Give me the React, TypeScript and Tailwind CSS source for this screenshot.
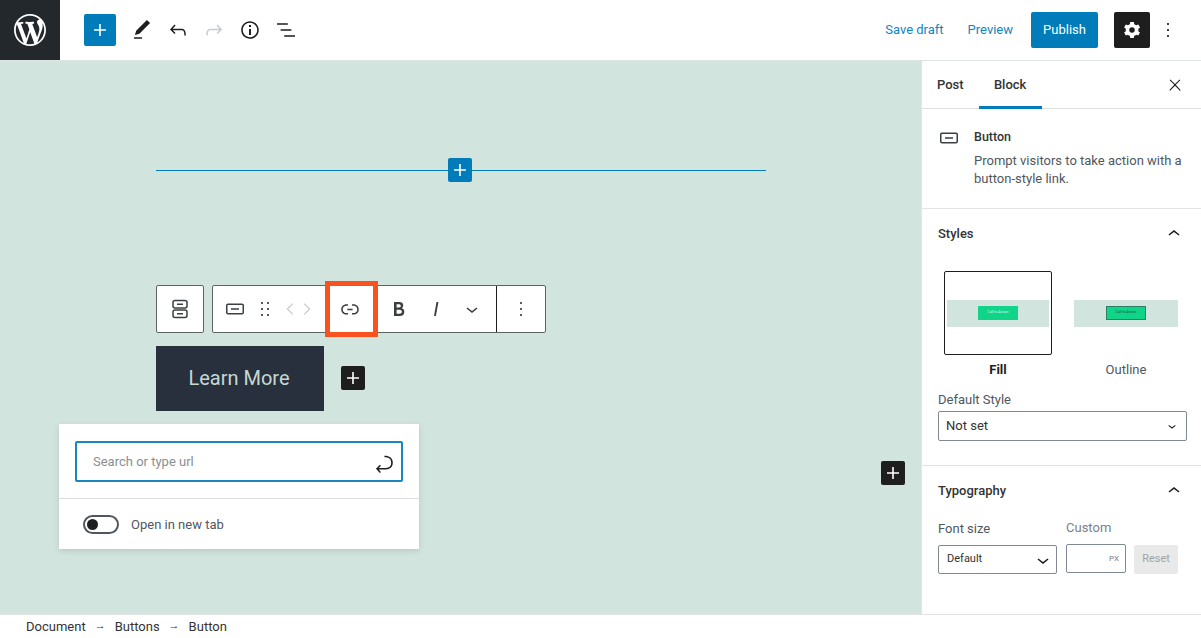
import type { ReactNode } from "react";

const icons = {
  plus: "M18 11.2h-5.2V6h-1.6v5.2H6v1.6h5.2V18h1.6v-5.2H18z",
  edit: "M20.1 5.1L16.9 2 6.2 12.7l-1.3 4.4 4.5-1.3L20.1 5.1zM4 20.8h8v-1.5H4v1.5z",
  undo: "M18.3 11.7c-.6-.6-1.4-.9-2.3-.9H6.7l2.9-3.3-1.1-1-4.5 5L8.5 16l1-1-2.7-2.7H16c.5 0 .9.2 1.3.5 1 1 1 3.4 1 4.5v.3h1.5v-.2c0-1.5 0-4.3-1.5-5.7z",
  redo: "M15.6 6.5l-1.1 1 2.9 3.3H8c-.9 0-1.7.3-2.3.9-1.4 1.5-1.4 4.2-1.4 5.6v.2h1.5v-.3c0-1.1 0-3.5 1-4.5.3-.3.7-.5 1.3-.5h9.2L14.5 15l1.1 1.1 4.6-4.6-4.6-5z",
  info: "M12 3.2c-4.8 0-8.8 3.9-8.8 8.8 0 4.8 3.9 8.8 8.8 8.8 4.8 0 8.8-3.9 8.8-8.8 0-4.8-4-8.8-8.8-8.8zm0 16c-4 0-7.2-3.3-7.2-7.2C4.8 8 8 4.8 12 4.8s7.2 3.3 7.2 7.2c0 4-3.2 7.2-7.2 7.2zM11 17h2v-6h-2v6zm0-8h2V7h-2v2z",
  list: "M13.8 5.2H3v1.5h10.8V5.2zm-3.6 12v1.5H21v-1.5H10.2zm7.2-6H6.6v1.5h10.8v-1.5z",
  cog: "M19 12c0-.5 0-.9-.1-1.3l1.9-1.4-1.9-3.3-2.2.9c-.7-.5-1.4-1-2.2-1.3L14 3.3h-3.9l-.4 2.3c-.8.3-1.6.8-2.2 1.3l-2.2-.9-1.9 3.3 1.9 1.4c-.1.4-.1.9-.1 1.3s0 .9.1 1.3l-1.9 1.4 1.9 3.3 2.2-.9c.7.5 1.4 1 2.2 1.3l.4 2.3H14l.4-2.3c.8-.3 1.6-.8 2.2-1.3l2.2.9 1.9-3.3-1.9-1.4c.1-.4.2-.8.2-1.3zM12 15a3 3 0 110-6 3 3 0 010 6z",
  more: "M13 19h-2v-2h2v2zm0-6h-2v-2h2v2zm0-6h-2V5h2v2z",
  close: "M13 11.8l6.1-6.3-1-1-6.1 6.2-6.1-6.2-1 1 6.1 6.3-6.5 6.7 1 1 6.5-6.6 6.5 6.6 1-1z",
  button: "M19 6.5H5c-1.1 0-2 .9-2 2v7c0 1.1.9 2 2 2h14c1.1 0 2-.9 2-2v-7c0-1.1-.9-2-2-2zm.5 9c0 .3-.2.5-.5.5H5c-.3 0-.5-.2-.5-.5v-7c0-.3.2-.5.5-.5h14c.3 0 .5.2.5.5v7zM8 12.8h8v-1.5H8v1.5z",
  drag: "M8 7h2V5H8v2zm0 6h2v-2H8v2zm0 6h2v-2H8v2zm6-14v2h2V5h-2zm0 8h2v-2h-2v2zm0 6h2v-2h-2v2z",
  link: "M15.6 7.2H14v1.5h1.6c2 0 3.7 1.7 3.7 3.7s-1.7 3.7-3.7 3.7H14v1.5h1.6c2.8 0 5.2-2.3 5.2-5.2 0-2.9-2.3-5.2-5.2-5.2zM4.7 12.4c0-2 1.7-3.7 3.7-3.7H10V7.2H8.4c-2.9 0-5.2 2.3-5.2 5.2 0 2.9 2.3 5.2 5.2 5.2H10v-1.5H8.4c-2 0-3.7-1.7-3.7-3.7zm4.6.9h5.3v-1.5H9.3v1.5z",
  bold: "M14.7 11.3c1-.6 1.5-1.6 1.5-3 0-2.3-1.3-3.4-4-3.4H7v14h5.8c1.4 0 2.5-.3 3.3-1 .8-.7 1.2-1.7 1.2-2.9.1-1.9-.8-3.1-2.6-3.7zm-5.1-4h2.3c.6 0 1.1.1 1.4.4.3.3.5.7.5 1.2s-.2 1-.5 1.2c-.3.3-.8.4-1.4.4H9.6V7.3zm4.6 9c-.4.3-1 .4-1.7.4H9.6v-3.9h2.9c.7 0 1.3.2 1.7.5.4.3.6.8.6 1.5s-.2 1.2-.6 1.5z",
  italic: "M12.5 5L10 19h1.9l2.5-14z",
  down: "M17.5 11.6L12 16l-5.5-4.4.9-1.2L12 14l4.5-3.6 1 1.2z",
  up: "M6.5 12.4L12 8l5.5 4.4-.9 1.2L12 10l-4.5 3.6-1-1.2z",
  back: "M15.5 6.5L10 12l5.5 5.5-.9.9L8.2 12l6.4-6.4z",
  forward: "M8.5 6.5L14 12l-5.5 5.5.9.9 6.4-6.4-6.4-6.4z",
  enter:
    "M6.734 16.106l2.176-2.38-1.093-1.028-3.846 4.158 3.846 4.157 1.093-1.027-2.176-2.38h2.811c1.125 0 2.25.03 3.374 0 1.428-.001 3.362-.25 4.963-1.277 1.682-1.08 2.92-2.906 2.92-5.7 0-2.797-1.24-4.623-2.92-5.7-1.6-1.029-3.535-1.278-4.963-1.279h-.47v1.5h.47c1.266.001 2.92.228 4.152 1.02 1.2.771 2.081 1.99 2.081 4.459 0 2.47-.88 3.689-2.08 4.46-1.233.79-2.888 1.016-4.152 1.017h-6.186z",
};

function Icon({ d, className = "w-6 h-6 fill-[#1e1e1e]" }: { d: string; className?: string }) {
  return (
    <svg viewBox="0 0 24 24" className={`shrink-0 ${className}`}>
      <path d={d} fillRule="evenodd" />
    </svg>
  );
}

function Section({ title, children }: { title: string; children: ReactNode }) {
  return (
    <section className="border-b border-[#e4e4e4] last:border-b-0 px-4 pt-4">
      <div className="flex items-center justify-between h-[18px]">
        <h2 className="text-[13px] font-medium text-[#333]">{title}</h2>
        <Icon d={icons.up} className="w-6 h-6 fill-[#1e1e1e] mr-[-1px]" />
      </div>
      {children}
    </section>
  );
}

function StylePreview({ active, outline, label }: { active?: boolean; outline?: boolean; label: string }) {
  return (
    <div className="flex flex-col items-center">
      <div
        className={`w-[108px] h-[84px] flex items-center rounded-[2px] border ${
          active ? "border-[#1e1e1e] px-[2px]" : "border-transparent px-px"
        }`}
      >
        <div className="w-full h-[27px] bg-[#d1e4dd] flex items-center justify-center">
          <div
            className={`w-[40px] h-[14px] bg-[#10d589] flex items-center justify-center text-[3.5px] ${
              outline ? "border border-[#2f7f67] text-[#1d4c3e]" : "text-[#d6f5e8]"
            }`}
          >
            Call to Action
          </div>
        </div>
      </div>
      <span className={`mt-[7px] text-[13px] leading-[15px] ${active ? "font-bold text-[#1e1e1e]" : "text-[#50575e]"}`}>
        {label}
      </span>
    </div>
  );
}

function AddBlock({ className = "" }: { className?: string }) {
  return (
    <button className={`w-6 h-6 bg-[#1e1e1e] rounded-[2px] flex items-center justify-center ${className}`}>
      <Icon d={icons.plus} className="w-6 h-6 fill-white" />
    </button>
  );
}

export default function App() {
  return (
    <div className="w-[1201px] h-[638px] overflow-hidden bg-white flex flex-col font-['Roboto',sans-serif] text-[#1e1e1e]">
      {/* Top bar */}
      <header className="h-[61px] shrink-0 flex items-center border-b border-[#dfe3e2]">
        <div className="w-[60px] h-[60px] bg-[#23282d] flex items-center justify-center">
          <svg viewBox="0 0 20 20" className="w-[32px] h-[32px] fill-white">
            <path d="M20 10c0-5.51-4.49-10-10-10C4.48 0 0 4.49 0 10c0 5.52 4.48 10 10 10 5.51 0 10-4.48 10-10zM7.78 15.37L4.37 6.22c.55-.02 1.17-.08 1.17-.08.5-.06.44-1.13-.06-1.11 0 0-1.45.11-2.37.11-.18 0-.37 0-.58-.01C4.12 2.69 6.87 1.11 10 1.11c2.33 0 4.45.87 6.05 2.34-.68-.11-1.65.39-1.65 1.58 0 .74.45 1.36.9 2.1.35.61.55 1.36.55 2.46 0 1.49-1.4 5-1.4 5l-3.03-8.37c.54-.02.82-.17.82-.17.5-.05.44-1.25-.06-1.22 0 0-1.44.12-2.38.12-.87 0-2.33-.12-2.33-.12-.5-.03-.56 1.2-.06 1.22l.92.08 1.26 3.41zM17.41 10c.24-.64.74-1.87.43-4.25.7 1.29 1.05 2.71 1.05 4.25 0 3.29-1.73 6.24-4.4 7.78.97-2.59 1.94-5.2 2.92-7.78zM6.1 18.09C3.12 16.65 1.11 13.53 1.11 10c0-1.3.23-2.48.72-3.59C3.25 10.3 4.67 14.2 6.1 18.09zm4.03-6.63l2.58 6.98c-.86.29-1.76.45-2.71.45-.79 0-1.57-.11-2.29-.33.81-2.38 1.62-4.74 2.42-7.1z" />
          </svg>
        </div>
        <button className="ml-6 w-8 h-8 rounded-[2px] bg-[#007cba] flex items-center justify-center">
          <Icon d={icons.plus} className="w-6 h-6 fill-white" />
        </button>
        <div className="ml-[14px] flex items-center gap-3">
          <Icon d={icons.edit} />
          <Icon d={icons.undo} />
          <Icon d={icons.redo} className="w-6 h-6 fill-[#c8cccf]" />
          <Icon d={icons.info} />
          <Icon d={icons.list} />
        </div>
        <div className="ml-auto flex items-center text-[13px] text-[#0f86c2]">
          <span>Save draft</span>
          <span className="ml-[24px]">Preview</span>
          <button className="ml-[18px] w-[67px] h-9 rounded-[2px] bg-[#007cba] text-white">Publish</button>
          <button className="ml-4 w-9 h-9 rounded-[2px] bg-[#1e1e1e] flex items-center justify-center">
            <Icon d={icons.cog} className="w-[22px] h-[22px] fill-white" />
          </button>
          <Icon d={icons.more} className="ml-[6px] mr-[21px] w-6 h-6 fill-[#3c4245]" />
        </div>
      </header>

      <div className="flex-1 min-h-0 flex">
        {/* Canvas */}
        <main className="relative w-[921px] shrink-0 bg-[#d1e4dd] pl-[156px] pt-[97px]">
          <div className="relative w-[610px] h-6">
            <div className="absolute inset-x-0 top-[12px] h-px bg-[#007cba]" />
            <button className="relative ml-[292px] w-6 h-6 rounded-[2px] bg-[#007cba] flex items-center justify-center">
              <Icon d={icons.plus} className="w-6 h-6 fill-white" />
            </button>
          </div>

          {/* Block toolbar */}
          <div className="mt-[103px] flex gap-2 h-12">
            <div className="w-12 bg-white border border-[#5d6563] rounded-[2px] flex items-center justify-center">
              <svg viewBox="0 0 24 24" className="w-6 h-6 fill-none stroke-[#3a3f41] stroke-[1.5]">
                <rect x="5" y="3.5" width="14" height="7.5" rx="2" />
                <rect x="5" y="13" width="14" height="7.5" rx="2" />
                <path d="M9 7.2h6M9 16.8h6" />
              </svg>
            </div>
            <div className="relative w-[334px] bg-white border border-[#5d6563] rounded-[2px] flex items-center">
              <Icon d={icons.button} className="ml-[10px] w-6 h-6 fill-[#3a3f41]" />
              <Icon d={icons.drag} className="ml-[6px] w-6 h-6 fill-[#555d60]" />
              <Icon d={icons.back} className="ml-[2px] w-[22px] h-[22px] fill-[#c4c8ca]" />
              <Icon d={icons.forward} className="ml-[-5px] w-[22px] h-[22px] fill-[#c4c8ca]" />
              <Icon d={icons.link} className="ml-[20px] w-6 h-6 fill-[#3a3f41]" />
              <Icon d={icons.bold} className="ml-[25px] w-6 h-6 fill-[#3a3f41]" />
              <Icon d={icons.italic} className="ml-[13px] w-6 h-6 fill-[#3a3f41]" />
              <Icon d={icons.down} className="ml-3 w-6 h-6 fill-[#3a3f41]" />
              <div className="ml-[12px] h-full w-px bg-[#1e1e1e]" />
              <Icon d={icons.more} className="ml-[12px] w-6 h-6 fill-[#555d60]" />
              {/* Highlight drawn over the screenshot */}
              <div className="absolute left-[112px] top-[-5px] w-[53px] h-[56px] border-[5px] border-[#f9521e]" />
            </div>
          </div>

          {/* Button block */}
          <div className="mt-[13px] flex items-center">
            <div className="w-[168px] h-[65px] pr-[2px] pb-[2px] bg-[#28303d] flex items-center justify-center text-[20px] text-[#c6d8d1]">
              Learn More
            </div>
            <AddBlock className="ml-[17px] -mt-px" />
          </div>

          {/* Link popover */}
          <div className="absolute left-[59px] top-[363px] w-[360px] h-[125px] bg-white shadow-[0_2px_6px_rgba(0,0,0,0.12)]">
            <div className="h-[75px] border-b border-[#dddddd] pl-4 pt-[17px]">
              <div className="w-[328px] h-[41px] rounded-[2px] border-2 border-[#1b86bd] flex items-center justify-between pl-4 pr-[5px]">
                <span className="text-[13px] text-[#8a8f94]">Search or type url</span>
                <Icon d={icons.enter} className="mt-1 w-6 h-6 fill-[#1e1e1e]" />
              </div>
            </div>
            <div className="flex items-center pl-6 pt-[15px]">
              <div className="relative w-9 h-[19px] rounded-full border-2 border-[#50575e]">
                <div className="absolute left-[2px] top-[2px] w-[11px] h-[11px] rounded-full bg-[#1e1e1e]" />
              </div>
              <span className="ml-3 mt-[1px] text-[13px] text-[#50575e]">Open in new tab</span>
            </div>
          </div>

          <AddBlock className="absolute left-[881px] top-[400px]" />
        </main>

        {/* Settings sidebar */}
        <aside className="flex-1 min-w-0 border-l border-[#e4e4e4]">
          <div className="relative h-[48px] border-b border-[#dfdfdf] flex items-center text-[13px] font-medium text-[#333]">
            <span className="ml-[15px]">Post</span>
            <div className="relative ml-[15px] w-[63px] h-full flex items-center justify-center">
              Block
              <div className="absolute inset-x-0 bottom-[-1px] h-[3px] bg-[#007cba]" />
            </div>
            <Icon d={icons.close} className="absolute right-[14px] top-[12px] w-[24px] h-[24px] fill-[#1e1e1e] scale-75" />
          </div>

          <div className="h-[100px] border-b border-[#e4e4e4] flex pl-[15px] pt-4">
            <Icon d={icons.button} className="mt-[1px] w-6 h-6 fill-[#3a3f41]" />
            <div className="ml-[13px] text-[13px] text-[#50575e]">
              <div className="text-[12.5px] font-medium text-[#333] leading-[24px] h-[24px]">Button</div>
              <p className="mt-[3px] leading-[18px] w-[215px]">Prompt visitors to take action with a button-style link.</p>
            </div>
          </div>

          <Section title="Styles">
            <div className="mt-[28px] flex gap-5 pl-[6px]">
              <StylePreview active label="Fill" />
              <StylePreview outline label="Outline" />
            </div>
            <div className="mt-[15px] text-[13px] leading-[15px] text-[#50575e]">Default Style</div>
            <div className="mt-[4px] mb-[24px] w-[249px] h-[30px] rounded-[2px] border border-[#7e8993] flex items-center justify-between pl-[7px] pr-[6px] text-[13px] text-[#333]">
              Not set
              <Icon d={icons.down} className="w-4 h-4 fill-[#1e1e1e]" />
            </div>
          </Section>

          <Section title="Typography">
            <div className="mt-[20px] flex items-end text-[13px] text-[#50575e]">
              <div>
                <div className="leading-[15px] mb-[9px]">Font size</div>
                <div className="w-[119px] h-[29px] rounded-[2px] border border-[#7e8993] flex items-center justify-between pl-[8px] pr-[1px] text-[11px] text-[#333]">
                  Default
                  <Icon d={icons.down} className="w-6 h-6 fill-[#1e1e1e]" />
                </div>
              </div>
              <div className="ml-[9px]">
                <div className="leading-[15px] mb-[9px] text-[#7b8186]">Custom</div>
                <div className="w-[60px] h-[29px] mb-[1px] rounded-[2px] border border-[#7e8993] flex items-center justify-end pr-[6px] text-[8px] text-[#7b8186]">
                  PX
                </div>
              </div>
              <div className="ml-2 w-[44px] h-[29px] rounded-[2px] bg-[#e9e9e9] flex items-center justify-center text-[11px] text-[#a0a4a7]">
                Reset
              </div>
            </div>
          </Section>
        </aside>
      </div>

      {/* Breadcrumb */}
      <footer className="h-[24px] shrink-0 border-t border-[#e4e4e4] flex items-center pl-[26px] text-[13px] text-[#333] bg-white">
        <span>Document</span>
        <span className="mx-[9px] text-[11px]">→</span>
        <span>Buttons</span>
        <span className="mx-[9px] text-[11px]">→</span>
        <span>Button</span>
      </footer>
    </div>
  );
}
